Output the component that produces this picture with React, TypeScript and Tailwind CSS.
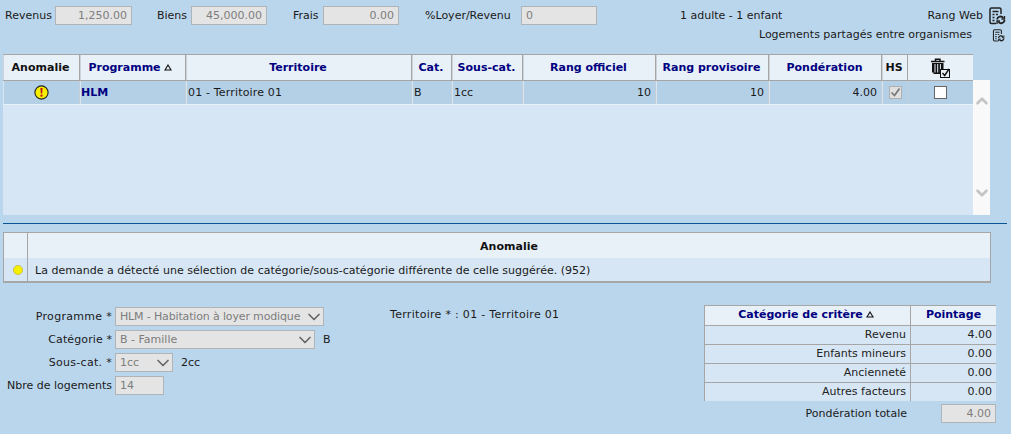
import React from 'react';
import { ChevronDown, ChevronUp } from 'lucide-react';

const font = { fontFamily: '"DejaVu Sans", sans-serif' };

const RefreshDoc = ({ size }: { size: number }) => (
  <svg width={size} height={size} viewBox="0 0 18 18" fill="none" stroke="#222" strokeWidth="1.5">
    <path d="M8 16.5H3.5A1.5 1.5 0 0 1 2 15V2.5A1.5 1.5 0 0 1 3.5 1h8A1.5 1.5 0 0 1 13 2.5V7" />
    <path d="M4.5 4.5h6M4.5 7.5h2M8 7.5h2M4.5 10.5h2M4.5 13.5h2" />
    <path d="M9 12.5a3.5 3.5 0 0 1 6.3-1.5M16.5 13a3.5 3.5 0 0 1-6.3 1.8" strokeWidth="1.8" />
    <path d="M16.5 9v3h-3M9 17v-3h3" strokeWidth="1.3" />
  </svg>
);

const SortUp = () => (
  <svg width="8" height="7" viewBox="0 0 8 7" className="ml-[3px] mb-[3px] inline-block">
    <path d="M4 1 7 6H1Z" fill="none" stroke="#111" strokeWidth="1.1" />
  </svg>
);

const ReadOnly = ({ w, value, right }: { w: string; value: string; right?: boolean }) => (
  <div className={`${w} h-[19px] bg-[#e4e4e4] border border-[#aeb4b8] text-[#7d7d7d] flex items-center px-[4px] pt-[1px] ${right ? 'justify-end' : ''}`}>
    {value}
  </div>
);

const Select = ({ w, value, tight }: { w: string; value: string; tight?: boolean }) => (
  <div className={`${w} h-[19px] bg-[#e4e4e4] border border-[#aeb4b8] text-[#7d7d7d] flex items-center justify-between pl-[4px] overflow-hidden`}>
    <span className={`pt-[1px] ${tight ? 'tracking-[-0.15px] whitespace-nowrap' : ''}`}>{value}</span>
    <ChevronDown className="w-[20px] h-[20px] shrink-0 text-[#666] -mr-[1px]" strokeWidth={2} />
  </div>
);

const cols = [
  { w: 'w-[77px]', label: 'Anomalie', black: true },
  { w: 'w-[106px]', label: 'Programme', sort: true },
  { w: 'w-[226px]', label: 'Territoire' },
  { w: 'w-[40px]', label: 'Cat.' },
  { w: 'w-[71px]', label: 'Sous-cat.' },
  { w: 'w-[133px]', label: 'Rang officiel' },
  { w: 'w-[113px]', label: 'Rang provisoire' },
  { w: 'w-[113px]', label: 'Pondération' },
  { w: 'w-[26px]', label: 'HS', black: true },
];

const cell = 'border-l border-r border-l-[#dbe5ee] border-r-[#c4ced8] flex items-center h-full';
const textCell = `${cell} pl-[1px] pt-[2px]`;

const criteres = [
  ['Revenu', '4.00'],
  ['Enfants mineurs', '0.00'],
  ['Ancienneté', '0.00'],
  ['Autres facteurs', '0.00'],
];

export default function App() {
  return (
    <div className="w-[1011px] h-[434px] overflow-hidden bg-[#bad6ec] text-[11px] text-[#1a1a1a]" style={font}>
      {/* Entete */}
      <div className="flex items-center h-[19px] mt-[6px] relative">
        <span className="ml-[5px] w-[50px] pt-[1px]">Revenus</span>
        <ReadOnly w="w-[77px]" value="1,250.00" right />
        <span className="ml-[25px] w-[34px] pt-[1px]">Biens</span>
        <ReadOnly w="w-[76px]" value="45,000.00" right />
        <span className="ml-[26px] w-[30px] pt-[1px]">Frais</span>
        <ReadOnly w="w-[76px]" value="0.00" right />
        <span className="ml-[26px] w-[96px] pt-[1px]">%Loyer/Revenu</span>
        <ReadOnly w="w-[76px]" value="0" />
        <span className="ml-[83px] pt-[1px]">1 adulte - 1 enfant</span>
        <span className="ml-auto mr-[5px] pt-[1px]">Rang Web</span>
        <span className="mr-[5px]"><RefreshDoc size={18} /></span>
      </div>
      <div className="flex items-center justify-end h-[16px] mt-[2px]">
        <span className="mr-[20px] pt-[1px]">Logements partagés entre organismes</span>
        <span className="mr-[6px]"><RefreshDoc size={13} /></span>
      </div>

      {/* Grille */}
      <div className="ml-[3px] mt-[11px] w-[987px]">
        <div className="flex h-[27px] w-[970px] bg-[#e8f0f8] border-t border-b border-[#a6a6a6] font-bold text-[#000080]">
          {cols.map((c) => (
            <div
              key={c.label}
              className={`${c.w} shrink-0 flex items-center justify-center pt-[2px] border-r border-l border-r-[#a6a6a6] border-l-[#cdd3d9] ${c.black ? 'text-[#111]' : ''} ${c.sort ? 'pr-[6px]' : 'pr-[2px]'}`}
            >
              {c.label}
              {c.sort && <SortUp />}
            </div>
          ))}
          <div className="flex-1 flex items-center justify-center pr-[2px]">
            <svg width="20" height="20" viewBox="0 0 20 20" fill="none">
              <path d="M1 3.5h13.5M5.5 3V1.2h4.5V3" stroke="#111" strokeWidth="1.5" />
              <path d="M2 5h11.5v9.5h-1V16h-9v-1.5H2Z" fill="#111" />
              <path d="M5 6v8.5M7.7 6v8.5M10.4 6v8.5" stroke="#e8f0f8" strokeWidth="1" />
              <rect x="10.5" y="11.5" width="9" height="8" fill="#e8f0f8" stroke="#111" />
              <path d="m12.5 15 2.2 2.5 4.3-6.5" stroke="#111" strokeWidth="1.4" />
            </svg>
          </div>
        </div>
        <div className="flex h-[134px] bg-[#d6e6f4]">
          <div className="w-[970px]">
            <div className="flex h-[24px] bg-[#b4d0e7] border-b border-[#e8f0f8]">
              <div className={`w-[77px] ${cell} justify-center`}>
                <svg width="15" height="15" viewBox="0 0 15 15">
                  <circle cx="7.5" cy="7.5" r="6.6" fill="#f6f000" stroke="#222" strokeWidth="1.1" />
                  <path d="M6.4 3h2.2l-.4 5.6H6.8Z" fill="#c0141c" />
                  <rect x="6.5" y="9.6" width="2" height="2" fill="#c0141c" />
                </svg>
              </div>
              <div className={`w-[106px] ${textCell} font-bold text-[#000080]`}>
                <span className="-ml-[1px]">HLM</span>
              </div>
              <div className={`w-[226px] ${textCell} tracking-[0.17px]`}>01 - Territoire 01</div>
              <div className={`w-[40px] ${textCell}`}>B</div>
              <div className={`w-[71px] ${textCell}`}>1cc</div>
              <div className={`w-[133px] ${textCell} justify-end pr-[4px]`}>10</div>
              <div className={`w-[113px] ${textCell} justify-end pr-[4px]`}>10</div>
              <div className={`w-[113px] ${textCell} justify-end pr-[4px]`}>4.00</div>
              <div className={`w-[26px] ${cell} justify-center`}>
                <div className="w-[13px] h-[13px] bg-[#e0e0e0] border border-[#b0b0b0] flex items-center justify-center">
                  <svg width="11" height="11" viewBox="0 0 11 11" fill="none">
                    <path d="m1.5 5.5 3 3 5-7" stroke="#777" strokeWidth="1.7" />
                  </svg>
                </div>
              </div>
              <div className="flex-1 flex items-center justify-center">
                <div className="w-[13px] h-[13px] bg-white border border-[#666]" />
              </div>
            </div>
          </div>
          <div className="w-[17px] -mt-px bg-[#f9f9f9] flex flex-col justify-between items-center pt-[12px] pb-[13px]">
            <ChevronUp className="w-[18px] h-[18px] text-[#c4c4c4]" strokeWidth={3.5} />
            <ChevronDown className="w-[18px] h-[18px] text-[#c4c4c4]" strokeWidth={3.5} />
          </div>
        </div>
      </div>

      <div className="ml-[3px] mt-[8px] w-[1004px] h-px bg-[#0b5596]" />

      {/* Anomalies */}
      <div className="ml-[3px] mt-[8px] w-[988px] h-[51px] border border-[#a6a6a6] border-b-2 bg-[#e8f0f8]">
        <div className="flex h-[25px] font-bold text-[#111]">
          <div className="w-[24px] border-r border-[#a6a6a6]" />
          <div className="flex-1 flex items-center justify-center pt-[3px]">Anomalie</div>
        </div>
        <div className="flex h-[23px] bg-[#d6e6f4]">
          <div className="w-[24px] border-r border-[#a6a6a6] flex items-center justify-center pl-[4px]">
            <div className="w-[10px] h-[10px] rounded-full bg-[#f6f000] border border-[#c9c24a]" />
          </div>
          <div className="flex-1 flex items-center pl-[7px] pt-[3px] tracking-[0.02px]">
            La demande a détecté une sélection de catégorie/sous-catégorie différente de celle suggérée. (952)
          </div>
        </div>
      </div>

      {/* Bas de page */}
      <div className="flex mt-[24px]">
        <div className="w-[390px] flex flex-col gap-[4px]">
          <div className="flex items-center">
            <span className="w-[112px] pt-[1px] text-right tracking-[0.3px]">Programme *</span>
            <div className="ml-[3px]"><Select w="w-[209px]" value="HLM - Habitation à loyer modique" tight /></div>
          </div>
          <div className="flex items-center">
            <span className="w-[112px] pt-[1px] text-right tracking-[0.1px]">Catégorie *</span>
            <div className="ml-[3px]"><Select w="w-[200px]" value="B - Famille" /></div>
            <span className="ml-[8px] pt-[1px]">B</span>
          </div>
          <div className="flex items-center">
            <span className="w-[112px] pt-[1px] text-right tracking-[0.3px]">Sous-cat. *</span>
            <div className="ml-[3px]"><Select w="w-[58px]" value="1cc" /></div>
            <span className="ml-[8px] pt-[1px]">2cc</span>
          </div>
          <div className="flex items-center">
            <span className="w-[112px] pt-[1px] text-right">Nbre de logements</span>
            <div className="ml-[3px]"><ReadOnly w="w-[49px]" value="14" /></div>
          </div>
        </div>
        <div className="w-[314px] tracking-[0.3px]">Territoire * : 01 - Territoire 01</div>
        <div className="w-[292px] -mt-[2px]">
          <div className="flex h-[20px] bg-[#e8f0f8] border-t border-[#a6a6a6] font-bold text-[#000080]">
            <div className="w-[207px] flex items-center justify-center pr-[3px] border-l border-r border-[#a6a6a6]">
              Catégorie de critère<SortUp />
            </div>
            <div className="flex-1 flex items-center justify-center">Pointage</div>
          </div>
          {criteres.map(([label, val]) => (
            <div key={label} className="flex h-[19px] bg-[#d6e6f4] border-t border-[#a6a6a6] text-[#222]">
              <div className="w-[207px] flex items-center justify-end pr-[4px] pt-[1px] border-l border-r border-[#a6a6a6]">{label}</div>
              <div className="flex-1 flex items-center justify-end pr-[4px] pt-[1px]">{val}</div>
            </div>
          ))}
          <div className="flex items-center h-[19px] mt-[3px]">
            <div className="w-[203px] pt-[1px] text-right">Pondération totale</div>
            <div className="ml-[34px]"><ReadOnly w="w-[55px]" value="4.00" right /></div>
          </div>
        </div>
      </div>
    </div>
  );
}
